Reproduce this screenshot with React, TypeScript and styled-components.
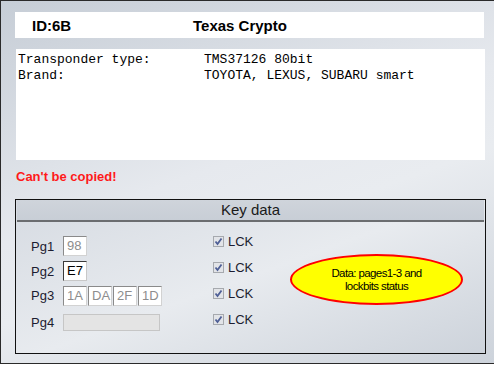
import styled, { createGlobalStyle } from 'styled-components';

const Global = createGlobalStyle`
  body {
    margin: 0;
    font-family: "Liberation Sans", Arial, sans-serif;
  }
`;

const Frame = styled.div`
  box-sizing: border-box;
  width: 494px;
  height: 364px;
  border: 1px solid #2a2a2a;
  border-right: none;
  background: linear-gradient(160deg, #c6cdd6 0%, #e6e9ee 45%, #e9ecf0 60%, #cdd3db 100%);
  padding: 11px 0 0 14px;
`;

const Header = styled.div`
  width: 469px;
  height: 26px;
  background: #fff;
  display: flex;
  align-items: center;
  padding-left: 17px;
  box-sizing: border-box;
  font-size: 15px;
  font-weight: bold;
  color: #000;
`;

const HeaderId = styled.span`
  width: 161px;
`;

const Info = styled.div`
  margin: 11px 0 0 1px;
  width: 469px;
  height: 111px;
  background: #fff;
  box-sizing: border-box;
  padding: 3px 0 0 2px;
  display: grid;
  grid-template-columns: 186px 1fr;
  grid-auto-rows: 16px;
  align-content: start;
  font-family: "Liberation Mono", "Courier New", monospace;
  font-size: 13px;
  color: #000;
`;

const Warning = styled.div`
  margin: 9px 0 0 1px;
  height: 16px;
  line-height: 16px;
  font-size: 13px;
  font-weight: bold;
  color: #ff1a1a;
`;

const KeyBox = styled.div`
  margin-top: 14px;
  width: 471px;
  height: 155px;
  box-sizing: border-box;
  border: 1px solid #111;
  background: linear-gradient(160deg, #d6dbe2 0%, #e8ebef 50%, #cdd3db 100%);
  display: flex;
  flex-direction: column;
`;

const KeyTitle = styled.div`
  height: 20px;
  line-height: 20px;
  text-align: center;
  font-size: 15px;
  color: #1a1a1a;
  background: linear-gradient(to bottom, #cfd4db, #c8ced6);
  border-bottom: 2px solid #6b6d70;
  margin: 0 1px;
`;

const KeyBody = styled.div`
  flex: 1;
  display: flex;
  align-items: flex-start;
  padding: 6px 22px 0 15px;
`;

const Rows = styled.div`
  margin-top: 5px;
  display: grid;
  grid-template-columns: 32px 150px;
  grid-template-rows: 26px 24px 25px 28px;
  align-items: center;
`;

const LockColumn = styled.div`
  display: grid;
  grid-auto-rows: 26px;
  align-items: center;
`;

const Label = styled.span`
  font-size: 13px;
  color: #1c1c30;
`;

const Inputs = styled.div`
  display: flex;
  gap: 1px;
`;

const Cell = styled.div<{ $w?: number; $dark?: boolean; $off?: boolean }>`
  box-sizing: border-box;
  width: ${p => p.$w ?? 24}px;
  height: ${p => (p.$off ? 17 : 20)}px;
  padding-left: 3px;
  line-height: 17px;
  font-size: 13px;
  color: ${p => (p.$dark ? '#000' : '#8d8d8d')};
  background: ${p => (p.$off ? '#e4e4e4' : '#fff')};
  border: 1px solid;
  border-color: ${p => (p.$dark ? '#3a3a3a #c8c8c8 #c8c8c8 #3a3a3a' : '#8a8a8a #d2d2d2 #d2d2d2 #8a8a8a')};
  ${p => p.$off && 'border-color: #c6c6c6;'}
`;

const Lock = styled.label`
  display: flex;
  align-items: center;
  gap: 4px;
  font-size: 13px;
  color: #1c1c30;
`;

const Bubble = styled.div`
  margin: 26px 0 0 auto;
  width: 173px;
  height: 51px;
  box-sizing: border-box;
  border: 2px solid #ff0000;
  border-radius: 50%;
  background: #ffff00;
  display: flex;
  align-items: center;
  justify-content: center;
  text-align: center;
  font-size: 11.5px;
  letter-spacing: -0.6px;
  line-height: 13px;
  color: #000;
`;

const Check = () => (
  <svg width="11" height="11" viewBox="0 0 11 11">
    <rect x="0.5" y="0.5" width="10" height="10" fill="#e2e4e8" stroke="#a6a9ae" />
    <path d="M2.5 5.5 L4.5 8 L8.5 2.5" fill="none" stroke="#4e5f96" strokeWidth="1.8" />
  </svg>
);

const LockBox = () => (
  <Lock>
    <Check />
    LCK
  </Lock>
);

export default function App() {
  return (
    <>
      <Global />
      <Frame>
        <Header>
          <HeaderId>ID:6B</HeaderId>
          <span>Texas Crypto</span>
        </Header>
        <Info>
          <span>Transponder type:</span>
          <span>TMS37126 80bit</span>
          <span>Brand:</span>
          <span>TOYOTA, LEXUS, SUBARU smart</span>
        </Info>
        <Warning>Can't be copied!</Warning>
        <KeyBox>
          <KeyTitle>Key data</KeyTitle>
          <KeyBody>
            <Rows>
              <Label>Pg1</Label>
              <Inputs>
                <Cell>98</Cell>
              </Inputs>
              <Label>Pg2</Label>
              <Inputs>
                <Cell $dark>E7</Cell>
              </Inputs>
              <Label>Pg3</Label>
              <Inputs>
                <Cell>1A</Cell>
                <Cell>DA</Cell>
                <Cell>2F</Cell>
                <Cell>1D</Cell>
              </Inputs>
              <Label>Pg4</Label>
              <Inputs>
                <Cell $w={97} $off />
              </Inputs>
            </Rows>
            <LockColumn>
              <LockBox />
              <LockBox />
              <LockBox />
              <LockBox />
            </LockColumn>
            <Bubble>
              Data: pages1-3 and
              <br />
              lockbits status
            </Bubble>
          </KeyBody>
        </KeyBox>
      </Frame>
    </>
  );
}
